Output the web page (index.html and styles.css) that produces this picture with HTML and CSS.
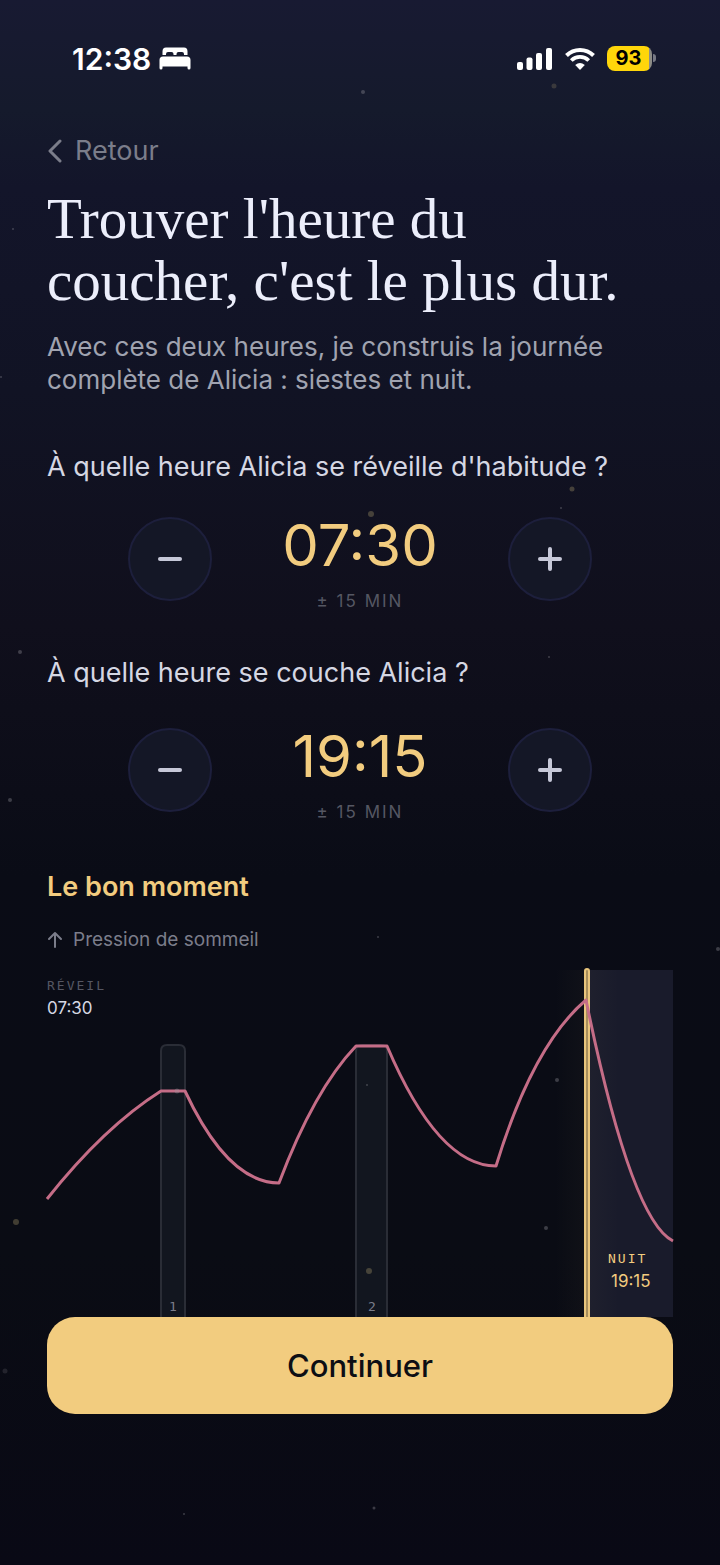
FILE: index.html
```html
<!DOCTYPE html>
<html lang="fr">
<head>
  <meta charset="UTF-8">
  <meta name="viewport" content="width=device-width, initial-scale=1.0">
  <title>Heure du coucher</title>
  <link rel="stylesheet" href="styles.css">
</head>
<body>
  <div class="screen">
    <header class="status-bar">
      <div class="status-left">
        <span class="clock">12:38</span>
        <svg class="icon-bed" viewBox="0 0 32 23" width="32" height="23" fill="#fff" aria-hidden="true">
          <path d="M3.500 8V4.500Q3.500 .5 7 .5H25Q28.500 .5 28.500 4.500V8H25V7Q25 5 23 5H19.500Q17.500 5 17.500 7V8H14.500V7Q14.500 5 12.500 5H9Q7 5 7 7V8Z"/>
          <path d="M4 9.500H28Q31.500 9.500 31.500 13V21Q31.500 22.500 30 22.500Q28.500 22.500 28.500 21V19.500H3.500V21Q3.500 22.500 2 22.500Q.5 22.500 .5 21V13Q.5 9.500 4 9.500Z"/>
        </svg>
      </div>
      <div class="status-right">
        <svg viewBox="0 0 36 24" width="36" height="24" fill="#fff" aria-hidden="true">
          <rect x="0" y="15" width="6" height="8" rx="2"/>
          <rect x="9.500" y="10.500" width="6" height="12.500" rx="2"/>
          <rect x="19" y="6" width="6" height="17" rx="2"/>
          <rect x="29" y="1" width="6" height="22" rx="2"/>
        </svg>
        <svg viewBox="0 0 30 23" width="30" height="23" aria-hidden="true">
          <path d="M1.500 8.500A19.200 19.200 0 0 1 28.500 8.500" fill="none" stroke="#fff" stroke-width="4"/>
          <path d="M6.300 13.500A12.300 12.300 0 0 1 23.700 13.500" fill="none" stroke="#fff" stroke-width="3.800"/>
          <path d="M15 23L10.200 18Q15 14 19.800 18Z" fill="#fff"/>
        </svg>
        <div class="battery"><span class="battery-level">93</span></div>
      </div>
    </header>

    <main class="content">
      <a class="back" href="#">
        <svg viewBox="0 0 16 24" width="16" height="24" fill="none" stroke="currentColor" stroke-width="3" stroke-linecap="round" stroke-linejoin="round" aria-hidden="true">
          <path d="M13 2L3 12L13 22"/>
        </svg>
        Retour
      </a>
      <h1 class="title">Trouver l'heure du<br>coucher, c'est le plus dur.</h1>
      <p class="intro">Avec ces deux heures, je construis la journée complète de Alicia : siestes et nuit.</p>

      <section class="field">
        <h2 class="question">À quelle heure Alicia se réveille d'habitude ?</h2>
        <div class="stepper">
          <button class="round" type="button" aria-label="Moins">
            <svg viewBox="0 0 28 28" width="28" height="28"><path d="M4 14H24"/></svg>
          </button>
          <div class="value">
            <span class="time">07:30</span>
            <span class="step">± 15 MIN</span>
          </div>
          <button class="round" type="button" aria-label="Plus">
            <svg viewBox="0 0 28 28" width="28" height="28"><path d="M4 14H24M14 4V24"/></svg>
          </button>
        </div>
      </section>

      <section class="field">
        <h2 class="question">À quelle heure se couche Alicia ?</h2>
        <div class="stepper">
          <button class="round" type="button" aria-label="Moins">
            <svg viewBox="0 0 28 28" width="28" height="28"><path d="M4 14H24"/></svg>
          </button>
          <div class="value">
            <span class="time">19:15</span>
            <span class="step">± 15 MIN</span>
          </div>
          <button class="round" type="button" aria-label="Plus">
            <svg viewBox="0 0 28 28" width="28" height="28"><path d="M4 14H24M14 4V24"/></svg>
          </button>
        </div>
      </section>

      <h2 class="moment">Le bon moment</h2>
      <p class="legend">
        <svg viewBox="0 0 16 18" width="16" height="18" fill="none" stroke="currentColor" stroke-width="2" stroke-linecap="round" stroke-linejoin="round" aria-hidden="true">
          <path d="M8 16V2M2 8L8 2L14 8"/>
        </svg>
        Pression de sommeil
      </p>

      <svg class="chart" viewBox="0 0 626 347">
        <defs>
          <linearGradient id="glow">
            <stop offset="0" stop-color="#f2cc7f" stop-opacity="0"/>
            <stop offset="0.5" stop-color="#f2cc7f" stop-opacity="0.03"/>
            <stop offset="1" stop-color="#f2cc7f" stop-opacity="0"/>
          </linearGradient>
        </defs>
        <rect class="night" x="540" y="0" width="86" height="347"/>
        <rect x="508" y="0" width="64" height="347" fill="url(#glow)"/>
        <!-- naps -->
        <path class="nap" d="M114 347V81Q114 75 120 75H132Q138 75 138 81V347"/>
        <path class="nap" d="M309 347V81Q309 75 315 75H334Q340 75 340 81V347"/>
        <!-- bedtime -->
        <rect class="bedtime" x="538" y="-1" width="4" height="352" rx="2"/>
        <path class="curve" d="M0 229Q57 157 114 121H138Q181 213 232 213Q267 120 309 76H340Q391 196 449 196Q486 75 539 30Q584 250 626 271"/>
        <text class="mono muted" x="0" y="20">RÉVEIL</text>
        <text class="hour light" x="0" y="44">07:30</text>
        <text class="nap-number" x="126" y="341">1</text>
        <text class="nap-number" x="325" y="341">2</text>
        <text class="mono gold" x="561" y="293">NUIT</text>
        <text class="hour gold" x="564" y="317">19:15</text>
      </svg>

      <button class="continue" type="button">Continuer</button>
    </main>

    <svg class="stars" viewBox="0 0 720 1565" aria-hidden="true">
      <g fill="#9a98a0">
        <circle cx="363" cy="92" r="2"/>
        <circle cx="13" cy="229" r="1"/>
        <circle cx="1" cy="377" r="1"/>
        <circle cx="561" cy="508" r="1"/>
        <circle cx="20" cy="652" r="2"/>
        <circle cx="549" cy="657" r="1"/>
        <circle cx="10" cy="800" r="2"/>
        <circle cx="378" cy="937" r="1"/>
        <circle cx="718" cy="949" r="2"/>
        <circle cx="367" cy="1085" r="1"/>
        <circle cx="557" cy="1080" r="2"/>
        <circle cx="546" cy="1228" r="2"/>
        <circle cx="374" cy="1508" r="1.500"/>
        <circle cx="184" cy="1514" r="1"/>
        <circle cx="5" cy="1371" r="2.500" opacity=".5"/>
        <circle cx="177" cy="1091" r="2.500"/>
      </g>
      <g fill="#a99a6c">
        <circle cx="554" cy="86" r="2.500" opacity=".7"/>
        <circle cx="572" cy="489" r="2.500"/>
        <circle cx="371" cy="514" r="3"/>
        <circle cx="16" cy="1222" r="3"/>
        <circle cx="369" cy="1271" r="3"/>
      </g>
    </svg>
  </div>
</body>
</html>
```
FILE: styles.css
```css
:root {
  --gold: #f2cc7f;
  --white: #eceefb;
  --text: #d5d7e3;
  --muted: #a0a3b0;
  --dim: #7b7d8a;
  --faint: #555763;
  --rose: #c56d87;
}
* {
  box-sizing: border-box;
  margin: 0;
  padding: 0;
}
body {
  font-family: Inter, sans-serif;
  background-color: #090a13;
  color: var(--text);
}
.screen {
  position: relative;
  min-height: 100vh;
  background: linear-gradient(#181a32 0%, #151a2c 7%, #13152a 12%, #111324 25%, #100f1c 40%, #0a0c16 56%, #0a0c14 80%, #090915 100%);
}
.status-bar {
  display: flex;
  justify-content: space-between;
  align-items: center;
  height: 117px;
  padding: 0 68px 0 72px;
}
.status-left {
  display: flex;
  align-items: center;
  gap: 8px;
}
.clock {
  font-size: 30px;
  font-weight: 600;
  color: #fff;
}
.status-right {
  display: flex;
  align-items: center;
  gap: 12px;
}
.battery {
  position: relative;
  width: 45px;
  height: 25px;
  border-radius: 8px;
  background: linear-gradient(90deg, #ffd60a 42px, #8d8c86 42px);
}
.battery::after {
  content: "";
  position: absolute;
  left: 46px;
  top: 8px;
  width: 3px;
  height: 8px;
  border-radius: 0 3px 3px 0;
  background: #777984;
}
.battery-level {
  display: block;
  width: 43px;
  text-align: center;
  font-size: 20px;
  font-weight: 700;
  line-height: 25px;
  color: #000;
}
.content {
  padding: 16px 47px 40px;
}
.back {
  display: flex;
  align-items: center;
  gap: 12px;
  width: fit-content;
  font-size: 27px;
  line-height: 36px;
  color: var(--dim);
  text-decoration: none;
}
.title {
  margin-top: 19px;
  font-family: "Liberation Serif", serif;
  font-size: 57px;
  font-weight: 400;
  line-height: 62px;
  color: var(--white);
}
.intro {
  margin-top: 18px;
  font-size: 26px;
  line-height: 33px;
  color: var(--muted);
}
.field {
  margin-top: 54px;
}
.question {
  margin-bottom: 33px;
  font-size: 27px;
  font-weight: 400;
  line-height: 34px;
}
.stepper {
  display: flex;
  justify-content: space-between;
  padding: 0 81px;
}
.round {
  display: grid;
  place-items: center;
  width: 84px;
  height: 84px;
  border: 2px solid #1d1f3c;
  border-radius: 50%;
  background-color: #141726;
  cursor: pointer;
}
.round svg {
  fill: none;
  stroke: #c6c8d8;
  stroke-width: 4;
  stroke-linecap: round;
}
.value {
  display: flex;
  flex-direction: column;
  align-items: center;
  gap: 16px;
}
.time {
  font-size: 58px;
  font-weight: 400;
  line-height: 56px;
  color: var(--gold);
}
.step {
  font-size: 17px;
  line-height: 24px;
  letter-spacing: 2px;
  color: var(--faint);
}
.field + .field {
  margin-top: 43px;
}
.field + .field .question {
  margin-bottom: 38px;
}
.moment {
  margin-top: 46px;
  font-size: 27px;
  font-weight: 600;
  line-height: 34px;
  color: var(--gold);
}
.legend {
  display: flex;
  align-items: center;
  gap: 10px;
  margin-top: 23px;
  font-size: 19px;
  line-height: 26px;
  color: var(--dim);
}
.chart {
  display: block;
  width: 100%;
  margin-top: 17px;
  overflow: visible;
}
.night {
  fill: #191b2b;
}
.nap {
  fill: #12161f;
  stroke: #2a2d36;
  stroke-width: 2;
}
.bedtime {
  fill: #a88e5c;
  stroke: #e9c57c;
  stroke-width: 2;
}
.curve {
  fill: none;
  stroke: var(--rose);
  stroke-width: 3;
  stroke-linejoin: round;
}
.mono {
  font-family: "DejaVu Sans Mono", monospace;
  font-size: 13px;
  letter-spacing: 2px;
}
.hour {
  font-size: 17px;
}
.nap-number {
  font-family: "DejaVu Sans Mono", monospace;
  font-size: 13px;
  text-anchor: middle;
  fill: var(--dim);
}
.muted {
  fill: var(--faint);
}
.light {
  fill: var(--text);
}
.gold {
  fill: var(--gold);
}
.continue {
  position: relative;
  display: block;
  width: 100%;
  height: 97px;
  border: none;
  border-radius: 28px;
  background-color: var(--gold);
  font-family: inherit;
  font-size: 31px;
  font-weight: 500;
  color: #0d0e14;
  cursor: pointer;
}
.stars {
  position: absolute;
  top: 0;
  left: 0;
  width: 100%;
  opacity: 0.35;
  pointer-events: none;
}
```
